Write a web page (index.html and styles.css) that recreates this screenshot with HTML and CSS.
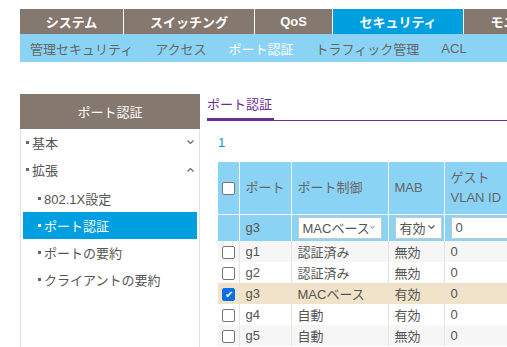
FILE: index.html
```html
<!DOCTYPE html>
<html lang="ja">
<head>
    <meta charset="UTF-8">
    <title>ポート認証</title>
    <link rel="stylesheet" href="styles.css">
</head>
<body>
    <div class="page">
        <div class="top-nav">
            <div class="tab tab-sys">システム</div>
            <div class="tab tab-sw">スイッチング</div>
            <div class="tab tab-qos">QoS</div>
            <div class="tab tab-sec active">セキュリティ</div>
            <div class="tab tab-mon">モニタリング</div>
        </div>
        <div class="sub-nav">
            <span class="sub-item">管理セキュリティ</span>
            <span class="sub-item">アクセス</span>
            <span class="sub-item current">ポート認証</span>
            <span class="sub-item">トラフィック管理</span>
            <span class="sub-item">ACL</span>
        </div>

        <div class="content">
            <div class="sidebar">
                <div class="side-head">ポート認証</div>
                <div class="side-item"><span class="dot"></span>基本
                    <svg class="chev" width="7" height="5" viewBox="0 0 7 5"><polyline points="0.5,0.5 3.5,3.5 6.5,0.5" fill="none" stroke="#666" stroke-width="1.2"/></svg>
                </div>
                <div class="side-item"><span class="dot"></span>拡張
                    <svg class="chev" width="7" height="5" viewBox="0 0 7 5"><polyline points="0.5,4.5 3.5,1.5 6.5,4.5" fill="none" stroke="#666" stroke-width="1.2"/></svg>
                </div>
                <div class="side-sub">
                    <div class="side-item sub"><span class="dot"></span>802.1X設定</div>
                    <div class="side-item sub selected"><span class="dot"></span>ポート認証</div>
                    <div class="side-item sub"><span class="dot"></span>ポートの要約</div>
                    <div class="side-item sub"><span class="dot"></span>クライアントの要約</div>
                </div>
            </div>

            <div class="main">
                <div class="title-bar">
                    <div class="title">ポート認証</div>
                </div>
                <div class="pager">1</div>
                <table class="grid">
                    <tr class="head">
                        <th class="c-chk"><span class="box"></span></th>
                        <th class="c-port">ポート</th>
                        <th class="c-ctrl">ポート制御</th>
                        <th class="c-mab">MAB</th>
                        <th class="c-vlan">ゲスト<br>VLAN ID</th>
                    </tr>
                    <tr class="edit">
                        <td></td>
                        <td>g3</td>
                        <td>
                            <div class="sel sel-ctrl">MACベース
                                <svg class="arrow" width="7" height="5" viewBox="0 0 7 5"><polyline points="0.5,0.5 3.5,3.5 6.5,0.5" fill="none" stroke="#555" stroke-width="1.2"/></svg>
                            </div>
                        </td>
                        <td>
                            <div class="sel sel-mab">有効
                                <svg class="arrow" width="7" height="5" viewBox="0 0 7 5"><polyline points="0.5,0.5 3.5,3.5 6.5,0.5" fill="none" stroke="#555" stroke-width="1.2"/></svg>
                            </div>
                        </td>
                        <td><div class="field">0</div></td>
                    </tr>
                    <tr class="odd">
                        <td><span class="box"></span></td><td>g1</td><td>認証済み</td><td>無効</td><td>0</td>
                    </tr>
                    <tr>
                        <td><span class="box"></span></td><td>g2</td><td>認証済み</td><td>無効</td><td>0</td>
                    </tr>
                    <tr class="picked">
                        <td><span class="box on">&#x2714;</span></td><td>g3</td><td>MACベース</td><td>有効</td><td>0</td>
                    </tr>
                    <tr>
                        <td><span class="box"></span></td><td>g4</td><td>自動</td><td>有効</td><td>0</td>
                    </tr>
                    <tr class="odd">
                        <td><span class="box"></span></td><td>g5</td><td>自動</td><td>無効</td><td>0</td>
                    </tr>
                </table>
            </div>
        </div>
    </div>
</body>
</html>
```

FILE: styles.css
```css
* {
    margin: 0;
    padding: 0;
    box-sizing: border-box;
}

body {
    font-family: "Liberation Sans", "Noto Sans CJK JP", sans-serif;
    font-size: 13px;
    background: white;
    color: #555;
    overflow: hidden;
    width: 507px;
    height: 347px;
}

.page {
    padding: 9px 0 0 20px;
    width: 640px;
}

.top-nav {
    display: flex;
    height: 25px;
    background: #85786e;
}

.tab {
    color: white;
    font-size: 13px;
    font-weight: bold;
    display: flex;
    align-items: center;
    justify-content: center;
    border-right: 1px solid white;
}

.tab-sys { width: 104px; }
.tab-sw { width: 131px; }
.tab-qos { width: 78px; }
.tab-sec { width: 131px; }
.tab-mon { width: 131px; border-right: none; }

.tab.active {
    background: #009fdf;
}

.sub-nav {
    height: 28px;
    background: #8ad3f4;
    display: flex;
    align-items: center;
    padding-left: 10px;
}

.sub-item {
    color: #666;
    margin-right: 22px;
}

.sub-item.current {
    color: white;
}

.content {
    display: flex;
    margin-top: 32px;
}

.sidebar {
    width: 180px;
    min-height: 260px;
    border-left: 1px solid #e2e2e2;
    border-right: 1px solid #e2e2e2;
}

.side-head {
    height: 35px;
    margin: 0 -1px;
    background: #85786e;
    color: white;
    display: flex;
    align-items: center;
    justify-content: center;
}

.side-item {
    height: 27px;
    display: flex;
    align-items: center;
    color: #555;
    padding-left: 5px;
}

.side-sub {
    padding-top: 2px;
}

.side-item.sub {
    margin: 0 2px;
    padding-left: 15px;
}

.side-item.selected {
    background: #009fdf;
    color: white;
}

.dot {
    width: 3px;
    height: 3px;
    background: #666;
    margin-right: 3px;
}

.selected .dot {
    background: white;
}

.chev {
    margin-left: auto;
    margin-right: 5px;
}

.main {
    margin-left: 7px;
    flex: 1;
}

.title-bar {
    border-bottom: 1px solid #6b2d8f;
    height: 27px;
}

.title {
    display: inline-block;
    color: #6b2d8f;
    height: 27px;
    line-height: 22px;
    border-bottom: 3px solid #6b2d8f;
    padding-right: 2px;
}

.pager {
    color: #0b98d6;
    margin: 14px 0 12px 11px;
    height: 15px;
    line-height: 15px;
}

.grid {
    margin-left: 11px;
    border-collapse: collapse;
}

.grid th,
.grid td {
    text-align: left;
    font-weight: normal;
    padding: 0 0 0 6px;
    border-left: 1px solid #e4e4e4;
    height: 21px;
    white-space: nowrap;
}

.grid th:first-child,
.grid td:first-child {
    border-left: none;
    padding-left: 4px;
}

.grid tr.head th {
    background: #8ad3f4;
    height: 52px;
    color: #666;
    border-left: 1px solid white;
    line-height: 20px;
    vertical-align: middle;
}

.grid tr.head th:first-child {
    border-left: none;
}

.c-chk { width: 21px; }
.c-port { width: 52px; }
.c-ctrl { width: 97px; }
.c-mab { width: 56px; }
.c-vlan { width: 80px; }

.grid tr.edit td {
    background: #8ad3f4;
    height: 27px;
    border-top: 1px solid white;
    border-left: 1px solid white;
}

.grid tr.edit td:first-child {
    border-left: none;
}

.odd td {
    background: #f6f6f6;
}

.picked td {
    background: #f0e3c9;
}

.box {
    display: inline-block;
    width: 13px;
    height: 13px;
    border: 1px solid #767676;
    border-radius: 2px;
    background: white;
    vertical-align: middle;
    font-size: 10px;
    line-height: 11px;
    text-align: center;
    color: white;
}

.box.on {
    background: #0b6fe8;
    border-color: #0b6fe8;
}

.sel {
    display: flex;
    align-items: center;
    height: 22px;
    background: white;
    border: 1px solid #c8c8c8;
    padding-left: 4px;
    color: #555;
}

.sel-ctrl { width: 84px; }
.sel-mab { width: 47px; }

.arrow {
    margin-left: auto;
    margin-right: 6px;
}

.field {
    height: 22px;
    width: 80px;
    background: white;
    border: 1px solid #c8c8c8;
    padding-left: 4px;
    line-height: 20px;
}
```
